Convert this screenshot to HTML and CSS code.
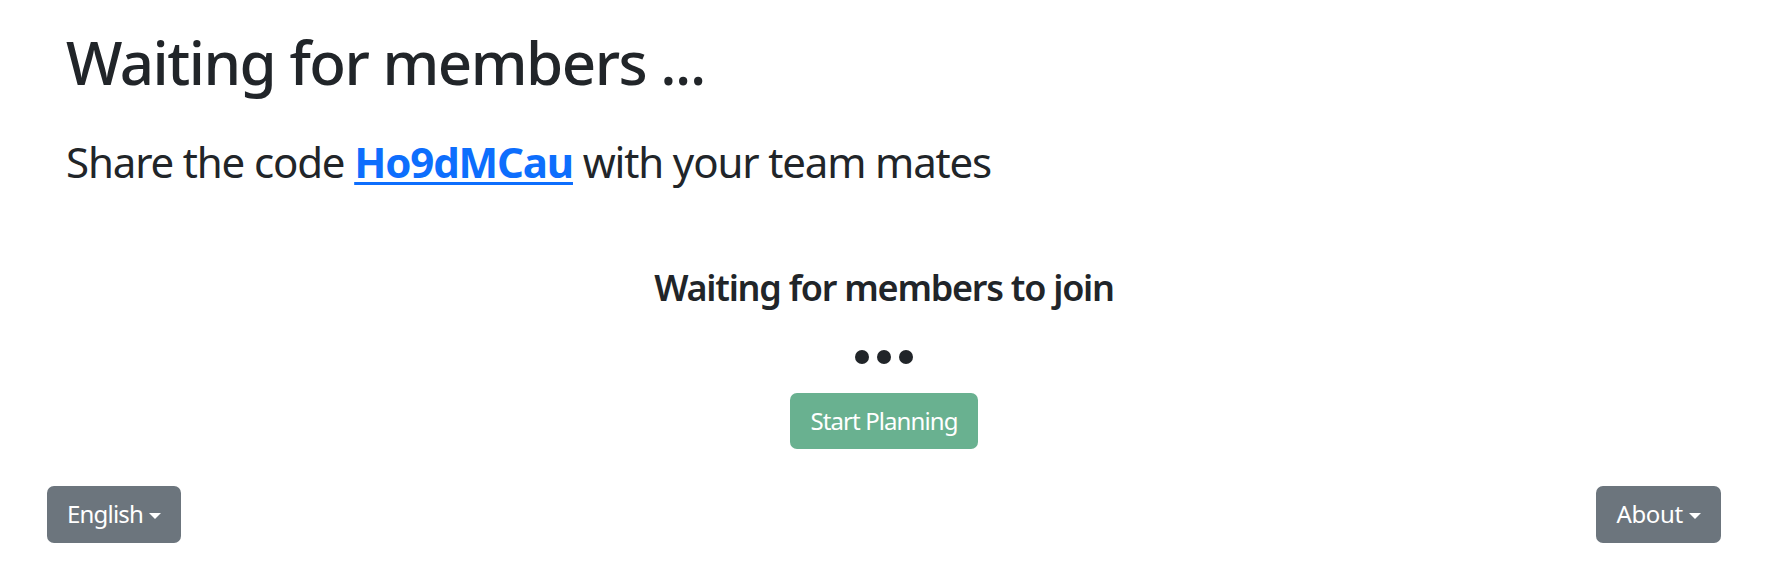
FILE: index.html
```html
<!DOCTYPE html>
<html lang="en">
<head>
<meta charset="utf-8">
<title>Waiting for members</title>
<link rel="stylesheet" href="styles.css">
</head>
<body>
<div class="page">
  <header class="intro">
    <h1 class="title">Waiting for members ...</h1>
    <p class="share">Share the code <a class="code" href="#">Ho9dMCau</a> with your team mates</p>
  </header>
  <section class="waiting">
    <h4 class="waiting-title">Waiting for members to join</h4>
    <div class="dots"><span class="dot"></span><span class="dot"></span><span class="dot"></span></div>
    <button class="btn btn-start" type="button" disabled>Start Planning</button>
  </section>
  <footer class="bar">
    <button class="btn btn-secondary btn-lang dropdown-toggle" type="button">English</button>
    <button class="btn btn-secondary dropdown-toggle" type="button">About</button>
  </footer>
</div>
</body>
</html>
```
FILE: styles.css
```css
html, body {
  margin: 0;
  padding: 0;
  background: #fff;
}
body {
  font-family: "Noto Sans", "Open Sans", "Liberation Sans", sans-serif;
  color: #212529;
}
.page {
  display: flex;
  flex-direction: column;
}
.intro {
  padding: 26px 0 0 66px;
}
.title {
  margin: 0;
  font-size: 60px;
  line-height: 72px;
  font-weight: 500;
  letter-spacing: -1.5px;
}
.share {
  margin: 32px 0 0;
  font-size: 42px;
  line-height: 63px;
  font-weight: 400;
  letter-spacing: -1.15px;
}
.code {
  color: #0d6efd;
  font-weight: 700;
  text-decoration: underline;
  text-decoration-thickness: 3px;
  text-underline-offset: 4px;
}
.waiting {
  margin: 73px 9px 0 0;
  display: flex;
  flex-direction: column;
  align-items: center;
}
.waiting-title {
  margin: 0;
  font-size: 36px;
  line-height: 43px;
  font-weight: 600;
  letter-spacing: -1.25px;
}
.dots {
  margin-top: 41px;
  display: flex;
  gap: 8px;
}
.dot {
  width: 14px;
  height: 14px;
  border-radius: 50%;
  background: #212529;
}
.btn {
  font-family: inherit;
  font-size: 24px;
  line-height: 36px;
  padding: 10px 20px;
  border: 0;
  border-radius: 7px;
  color: #fff;
  letter-spacing: -0.9px;
}
.btn-start {
  margin-top: 29px;
  background: #69b190;
}
.bar {
  margin-top: 37px;
  padding: 0 56px 0 47px;
  display: flex;
  justify-content: space-between;
}
.btn-secondary {
  background: #6c757d;
  padding: 10px 20px 11px;
  letter-spacing: -0.3px;
}
.btn-lang {
  letter-spacing: -0.8px;
}
.dropdown-toggle::after {
  content: "";
  display: inline-block;
  margin-left: 6px;
  vertical-align: 4px;
  border-top: 6px solid #fff;
  border-left: 6.5px solid transparent;
  border-right: 6.5px solid transparent;
}
```
